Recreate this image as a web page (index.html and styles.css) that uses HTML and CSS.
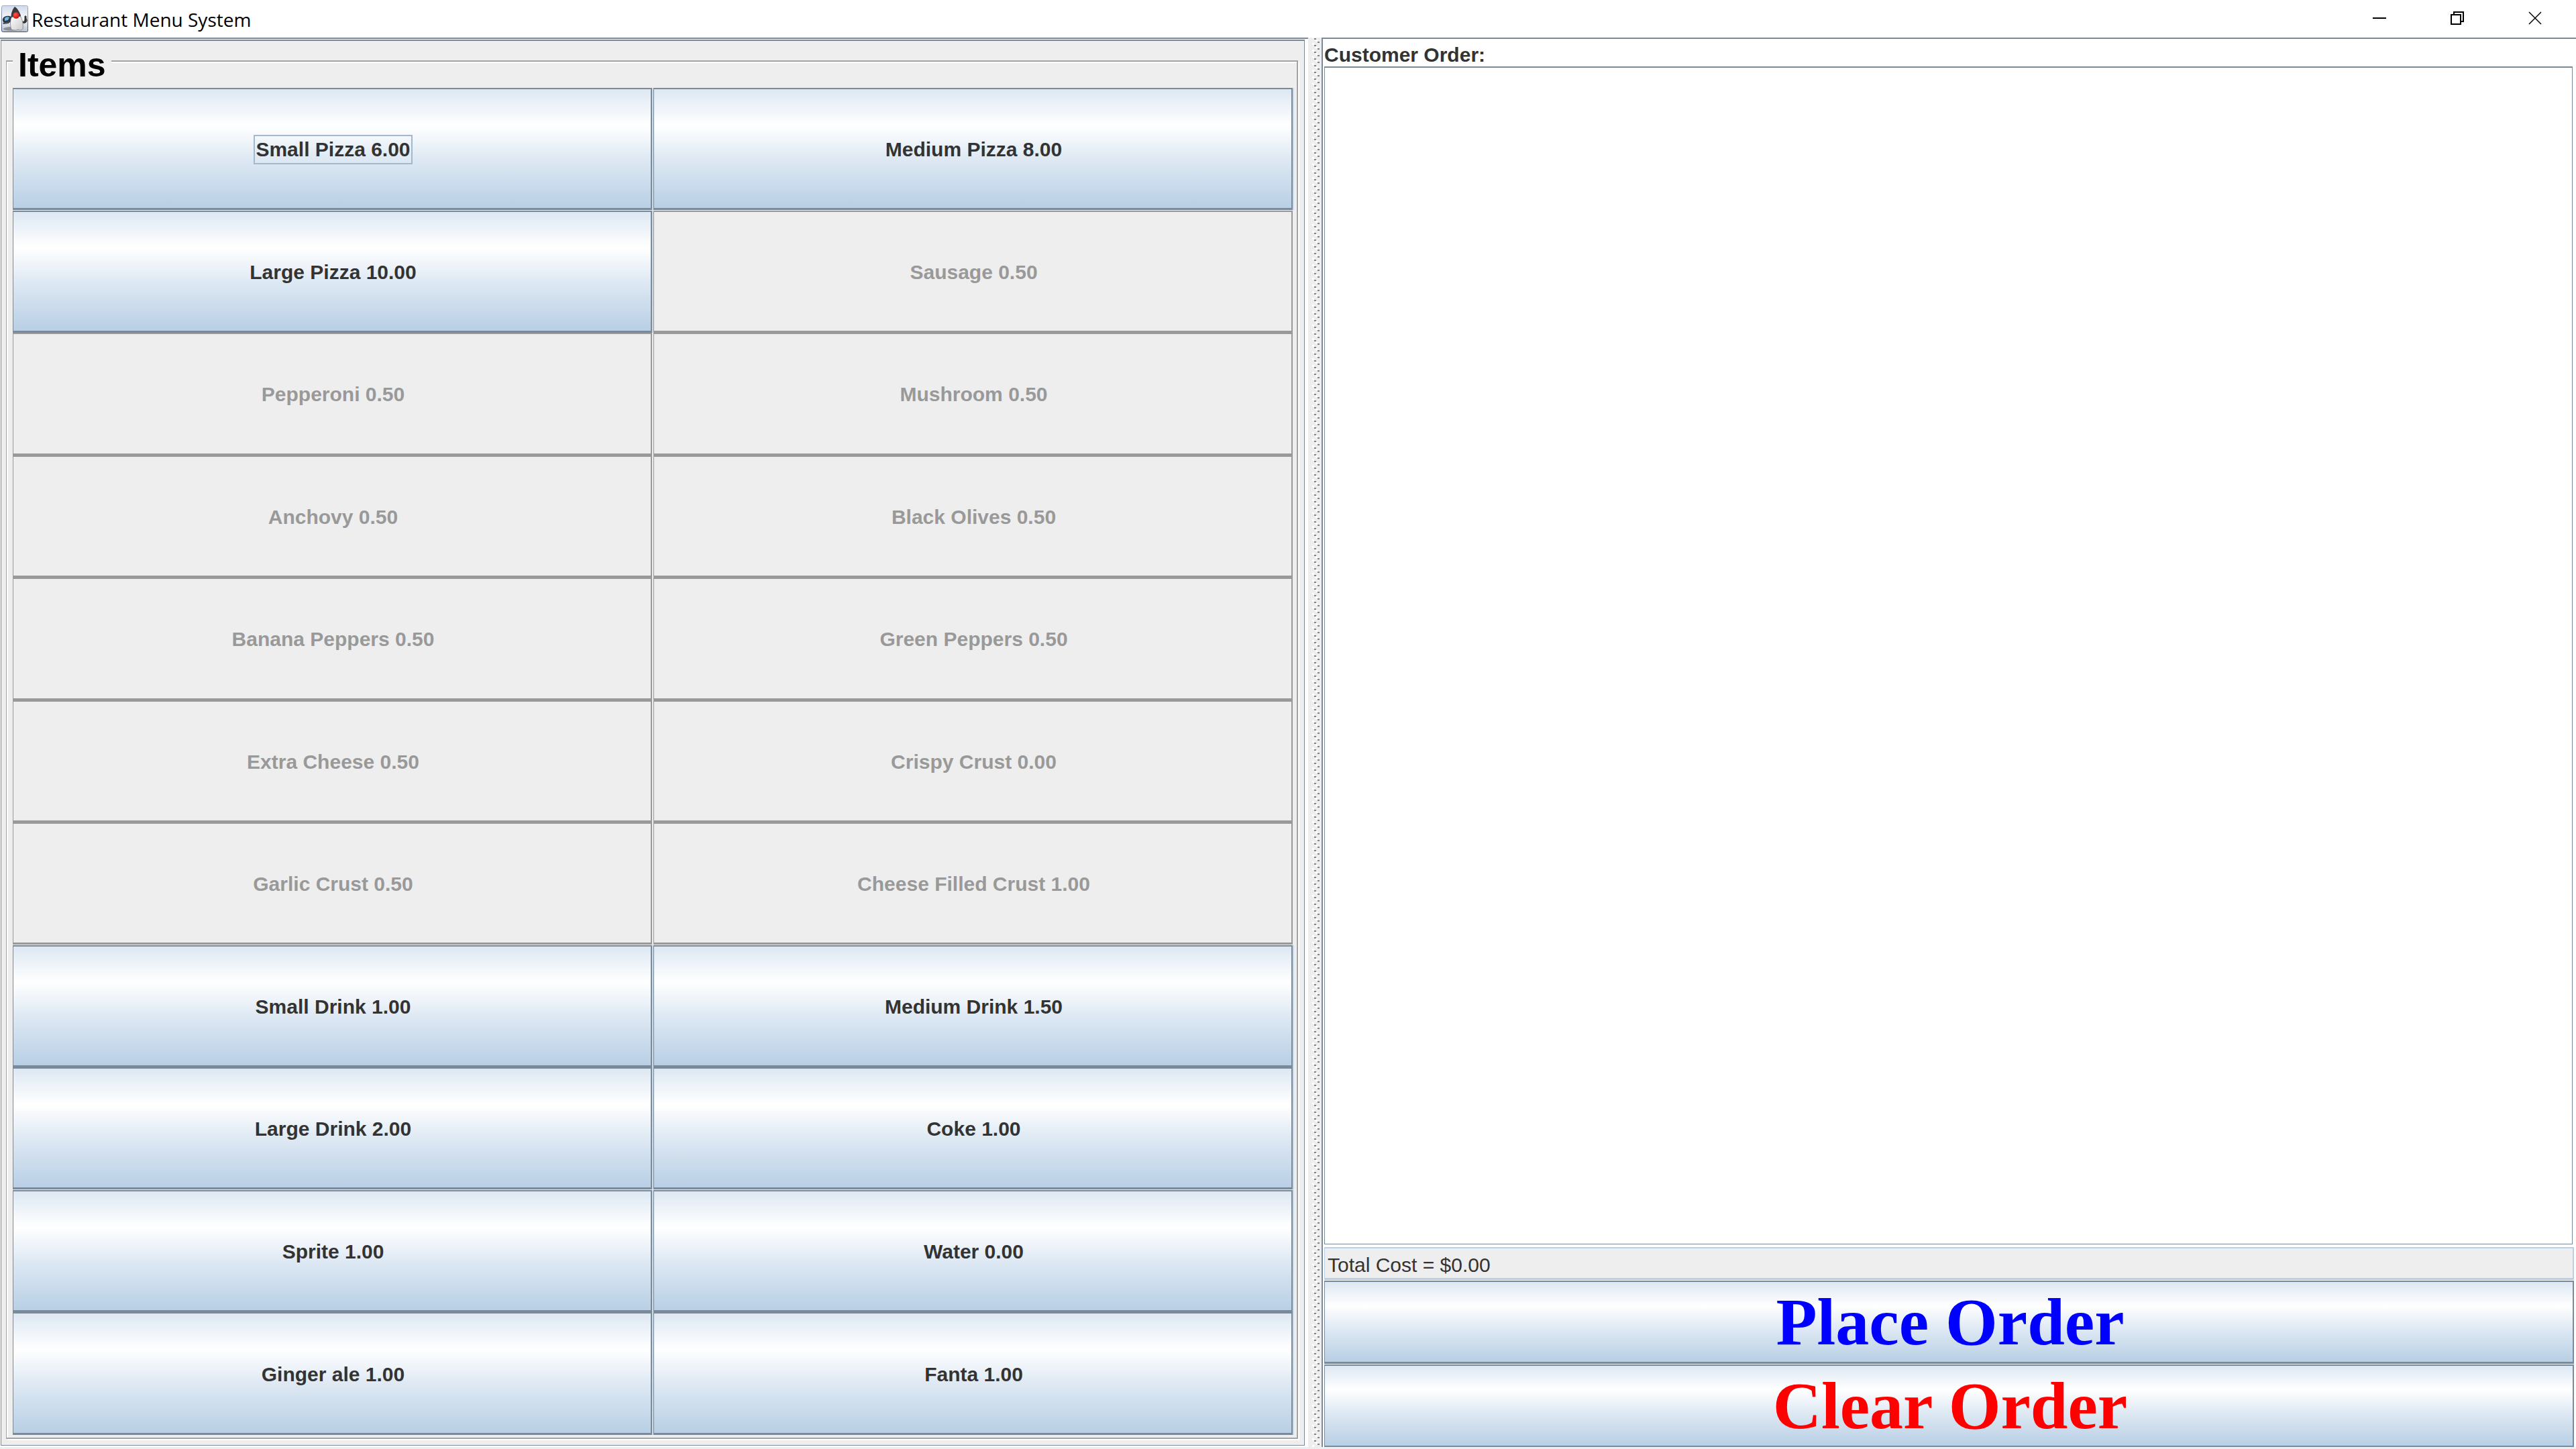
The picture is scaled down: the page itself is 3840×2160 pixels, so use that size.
FILE: index.html
```
<!DOCTYPE html>
<html lang="en">
<head>
<meta charset="utf-8">
<title>Restaurant Menu System</title>
<link rel="stylesheet" href="styles.css">
</head>
<body>
<header class="titlebar">
  <svg class="app-icon" viewBox="0 0 40 40" aria-hidden="true">
    <defs>
      <linearGradient id="tile" x1="0" y1="0" x2="0" y2="1"><stop offset="0" stop-color="#d3dae8"/><stop offset=".5" stop-color="#f6f8fb"/><stop offset="1" stop-color="#b7bfce"/></linearGradient>
      <linearGradient id="edge" x1="0" y1="0" x2="0" y2="1"><stop offset="0" stop-color="#9fadc4"/><stop offset="1" stop-color="#3d5478"/></linearGradient>
      <linearGradient id="belly" x1="0" y1="0" x2="1" y2="1"><stop offset="0" stop-color="#fff"/><stop offset="1" stop-color="#c9c9c9"/></linearGradient>
      <radialGradient id="nose" cx=".4" cy=".35" r=".7"><stop offset="0" stop-color="#ff5a4a"/><stop offset="1" stop-color="#b80d0d"/></radialGradient>
    </defs>
    <rect x=".5" y=".5" width="39" height="39" rx="2" fill="url(#tile)" stroke="url(#edge)"/>
    <ellipse cx="15" cy="35" rx="12" ry="3" fill="#8b8f98"/>
    <path d="M2 20c2-5 9-5 13-3l-1 8-6 2c-4 0-7-3-6-7z" fill="#2c3a48"/>
    <path d="M5 19c2-2 5-2 7-1l-2 4-5 1z" fill="#6fb7e6"/>
    <path d="M2 26l10-2-1 3-8 1z" fill="#4b4b50"/>
    <path d="M31 24c3 1 4-1 4-4v-4h2v3l1 3c0 4-3 5-7 4z" fill="#333" stroke="#333"/>
    <path d="M20 2c4 2 7 8 9 13l-1 4-14 1 1-8c1-4 3-8 5-10z" fill="#3a3a3d"/>
    <path d="M15 18c4-2 10-2 14-1 3 6 4 12 3 18-2 3-5 2-7 1-3 2-7 1-10 0-2-6-2-12 0-18z" fill="url(#belly)" stroke="#77777a" stroke-width=".7"/>
    <circle cx="22" cy="15" r="4.800" fill="url(#nose)"/>
  </svg>
  <h1 class="title">Restaurant Menu System</h1>
  <div class="window-controls">
    <button type="button" aria-label="Minimize"><svg viewBox="0 0 20 20"><path d="M0 10h20" stroke-width="2"/></svg></button>
    <button type="button" aria-label="Restore"><svg viewBox="0 0 20 20"><path d="M1 5h14v14H1zM5 5V1h14v14h-4" stroke-width="2"/></svg></button>
    <button type="button" aria-label="Close"><svg viewBox="0 0 20 20"><path d="M1 1l18 18M19 1L1 19" stroke-width="1.500"/></svg></button>
  </div>
</header>
<main class="split">
  <section class="menu-pane">
    <fieldset class="items">
      <legend>Items</legend>
      <div class="grid">
        <button type="button" class="item"><span class="focused">Small Pizza 6.00</span></button>
        <button type="button" class="item">Medium Pizza 8.00</button>
        <button type="button" class="item">Large Pizza 10.00</button>
        <button type="button" class="item" disabled>Sausage 0.50</button>
        <button type="button" class="item" disabled>Pepperoni 0.50</button>
        <button type="button" class="item" disabled>Mushroom 0.50</button>
        <button type="button" class="item" disabled>Anchovy 0.50</button>
        <button type="button" class="item" disabled>Black Olives 0.50</button>
        <button type="button" class="item" disabled>Banana Peppers 0.50</button>
        <button type="button" class="item" disabled>Green Peppers 0.50</button>
        <button type="button" class="item" disabled>Extra Cheese 0.50</button>
        <button type="button" class="item" disabled>Crispy Crust 0.00</button>
        <button type="button" class="item" disabled>Garlic Crust 0.50</button>
        <button type="button" class="item" disabled>Cheese Filled Crust 1.00</button>
        <button type="button" class="item">Small Drink 1.00</button>
        <button type="button" class="item">Medium Drink 1.50</button>
        <button type="button" class="item">Large Drink 2.00</button>
        <button type="button" class="item">Coke 1.00</button>
        <button type="button" class="item">Sprite 1.00</button>
        <button type="button" class="item">Water 0.00</button>
        <button type="button" class="item">Ginger ale 1.00</button>
        <button type="button" class="item">Fanta 1.00</button>
      </div>
    </fieldset>
  </section>
  <div class="divider" role="separator"></div>
  <section class="order-pane">
    <label class="order-label" for="order">Customer Order:</label>
    <textarea class="order-list" id="order" readonly></textarea>
    <input class="total" type="text" aria-label="Total cost" value="Total Cost = $0.00" readonly>
    <button type="button" class="action place">Place Order</button>
    <button type="button" class="action clear">Clear Order</button>
  </section>
</main>
</body>
</html>
```
FILE: styles.css
```
* { box-sizing: border-box; }

:root {
  --edge: #7a8a99;
  --face: #eeeeee;
  --soft: #b8cfe5;
  --gloss: linear-gradient(#dde8f3, #ffffff 30%, #dde8f3 60%, #b8cfe5);
}

body {
  margin: 0;
  height: 100vh;
  display: flex;
  flex-direction: column;
  background: #ffffff;
  color: #333333;
  font: 30px/34px "Liberation Sans", Arial, sans-serif;
}

button, input, textarea {
  font: inherit;
  color: inherit;
  border-radius: 0;
  margin: 0;
}

.titlebar {
  display: flex;
  align-items: center;
  height: 56px;
  padding-left: 2px;
  gap: 5px;
  flex: none;
}
.app-icon { width: 40px; height: 40px; }
.title {
  flex: 1;
  margin: 0;
  padding-top: 2px;
  color: #000000;
  font: 28px/40px "Open Sans", "Noto Sans", sans-serif;
}
.window-controls {
  display: flex;
  height: 100%;
  padding: 0 3px 2px 0;
}
.window-controls button {
  display: grid;
  place-items: center;
  width: 116px;
  padding: 0;
  border: 0;
  background: none;
}
.window-controls svg {
  width: 20px;
  height: 20px;
  fill: none;
  stroke: #000000;
}

.split {
  flex: 1;
  min-height: 0;
  display: grid;
  grid-template-columns: 1950fr 20px 1870fr;
  background: var(--face);
  padding-bottom: 3px;
}

.menu-pane {
  display: flex;
  border: solid var(--edge);
  border-width: 2px 0 0;
  padding: 1px 5px 2px 1px;
  background: #ffffff;
}
.items {
  position: relative;
  flex: 1;
  display: flex;
  min-width: 0;
  margin: 0;
  padding: 70px 17px 15px 17px;
  border: solid var(--edge);
  border-width: 2px 1px 1px 1px;
  background: var(--face);
}
/* Etched group border, broken by the legend */
.items::before {
  content: "";
  position: absolute;
  inset: 29px 9px 9px 7px;
  border: 2px solid #a3a3a3;
  border-left-width: 1px;
  box-shadow: 2px 2px 0 #ffffff, inset 2px 2px 0 #ffffff;
}
.items legend {
  position: absolute;
  top: 8px;
  left: 17px;
  padding: 0 8px;
  background: var(--face);
  color: #000000;
  font: bold 50px/56px "Liberation Sans", Arial, sans-serif;
}
.grid {
  position: relative;
  flex: 1;
  display: grid;
  grid-template-columns: 1fr 1fr;
  grid-auto-rows: 1fr;
  column-gap: 2px;
}
.item {
  padding: 3px 0 0 3px;
  border: solid var(--edge);
  border-width: 2px 2px 3px 1px;
  background: var(--gloss) padding-box;
  box-shadow: 2px 0 0 #ccdbe9;
  font-weight: bold;
}
.item:disabled {
  border-color: #999999;
  background: var(--face);
  box-shadow: none;
  color: #999999;
}
/* Light seams under the first, seventh and ninth rows */
.item:nth-child(-n+2),
.item:nth-child(13), .item:nth-child(14),
.item:nth-child(17), .item:nth-child(18) {
  margin-bottom: 1px;
}
.focused {
  display: inline-block;
  padding: 3px 1px;
  border: 2px solid #a3b8cc;
}

/* Two staggered columns of raised dots */
.divider {
  background:
    linear-gradient(#80868c 2px, transparent 2px) 9px 11px / 3px 10px repeat-y,
    linear-gradient(#80868c 2px, transparent 2px) 14px 16px / 3px 10px repeat-y,
    linear-gradient(#ffffff 3px, transparent 3px) 6px 8px / 3px 10px repeat-y,
    linear-gradient(#ffffff 3px, transparent 3px) 11px 13px / 3px 10px repeat-y,
    var(--face);
}

.order-pane {
  display: flex;
  flex-direction: column;
  min-width: 0;
  padding: 0 3px 0 2px;
  border: solid var(--edge);
  border-width: 2px 0 0 2px;
  background: #ffffff;
}
.order-label {
  padding: 7px 0 0;
  font-weight: bold;
}
.order-list {
  flex: 1;
  margin-right: 2px;
  border: solid var(--edge);
  border-width: 2px 1px 1px;
  background: #ffffff;
  resize: none;
  outline: 0;
}
.total {
  height: 49px;
  margin: 4px 0 1px;
  padding: 5px 4px 0;
  border: solid var(--soft);
  border-width: 2px 2px 3px 1px;
  background: var(--face);
}
.action {
  height: 123px;
  padding: 0 0 0 4px;
  border: solid var(--edge);
  border-width: 2px 2px 2px 1px;
  background: var(--gloss) padding-box;
  font: bold 100px/116px "Liberation Serif", "Times New Roman", serif;
}
.place { height: 124px; border-bottom-width: 3px; margin-bottom: 1px; color: #0000ff; }
.clear { color: #ff0000; }
```
